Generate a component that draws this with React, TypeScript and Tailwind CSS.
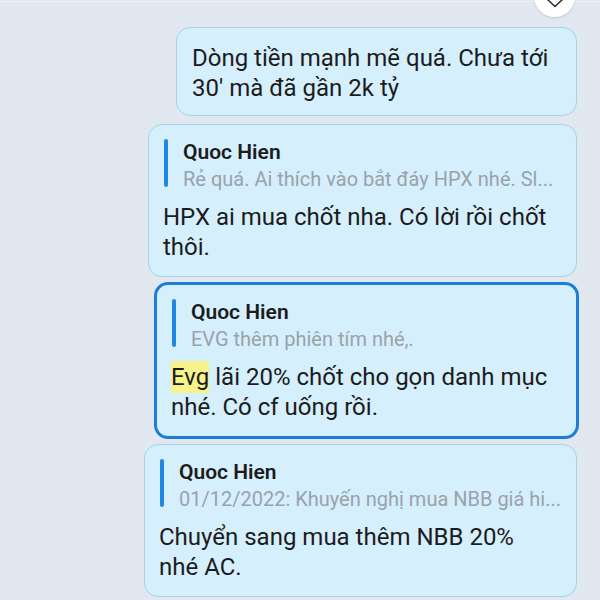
import React from "react";

type Msg = {
  width: string;
  highlighted?: boolean;
  quote?: { name: string; text: string };
  body: React.ReactNode;
};

function Bubble({ width, highlighted, quote, body }: Msg) {
  return (
    <div
      className={`${width} rounded-[14px] bg-[#d5effc] ${
        highlighted ? "border-[3px] border-[#1b7fd9]" : "border border-[#a6d3e6]"
      } pl-[14px] pr-[20px] pt-[14px] pb-[14px]`}
    >
      {quote && (
        <div className="flex mb-[9px]">
          <div className="w-[4px] h-[48px] rounded-full bg-[#1e88e5] ml-[1px]" />
          <div className="ml-[15px] flex flex-col min-w-0">
            <div className="text-[21px] leading-[27px] font-semibold text-[#1c1c1c]">
              {quote.name}
            </div>
            <div className="text-[20px] leading-[27px] text-[#9aa2aa] whitespace-nowrap">
              {quote.text}
            </div>
          </div>
        </div>
      )}
      <div className="text-[24px] leading-[30px] text-[#1c1c1c]">{body}</div>
    </div>
  );
}

export default function App() {
  return (
    <div
      className="relative w-[600px] h-[600px] overflow-hidden bg-[#e2e8f0]"
      style={{ fontFamily: "Roboto, 'Noto Sans', sans-serif" }}
    >
      <div className="h-[1px] mt-[1px] bg-[#eef2f7]" />
      <div className="absolute left-[534px] top-[-24px] w-[41px] h-[41px] rounded-full bg-white shadow-sm flex items-end justify-center pb-[9px]">
        <svg width="18" height="10" viewBox="0 0 18 10" fill="none">
          <path d="M1.5 1.5 L9 8.5 L16.5 1.5" stroke="#333" strokeWidth="1.6" strokeLinecap="round" strokeLinejoin="round" />
        </svg>
      </div>
      <div className="flex flex-col items-end pr-[23px] pt-[25px]">
        <div className="w-[401px] rounded-[14px] bg-[#d5effc] border border-[#a6d3e6] pl-[15px] pr-[12px] pt-[15px] pb-[12px]">
          <div className="text-[24px] leading-[30px] text-[#1c1c1c]">
            Dòng tiền mạnh mẽ quá. Chưa tới 30' mà đã gần 2k tỷ
          </div>
        </div>
        <div className="h-[8px]" />
        <Bubble
          width="w-[429px]"
          quote={{ name: "Quoc Hien", text: "Rẻ quá. Ai thích vào bắt đáy HPX nhé. Sl..." }}
          body="HPX ai mua chốt nha. Có lời rồi chốt thôi."
        />
        <div className="h-[5px]" />
        <div className="mr-[-2px]">
          <Bubble
            width="w-[425px]"
            highlighted
            quote={{ name: "Quoc Hien", text: "EVG thêm phiên tím nhé,." }}
            body={
              <>
                <span className="bg-[#f6f28c] py-[2px]">Evg</span> lãi 20% chốt cho gọn danh mục nhé. Có cf uống rồi.
              </>
            }
          />
        </div>
        <div className="h-[5px]" />
        <Bubble
          width="w-[433px]"
          quote={{ name: "Quoc Hien", text: "01/12/2022: Khuyến nghị mua NBB giá hi..." }}
          body="Chuyển sang mua thêm NBB 20% nhé AC."
        />
      </div>
    </div>
  );
}
